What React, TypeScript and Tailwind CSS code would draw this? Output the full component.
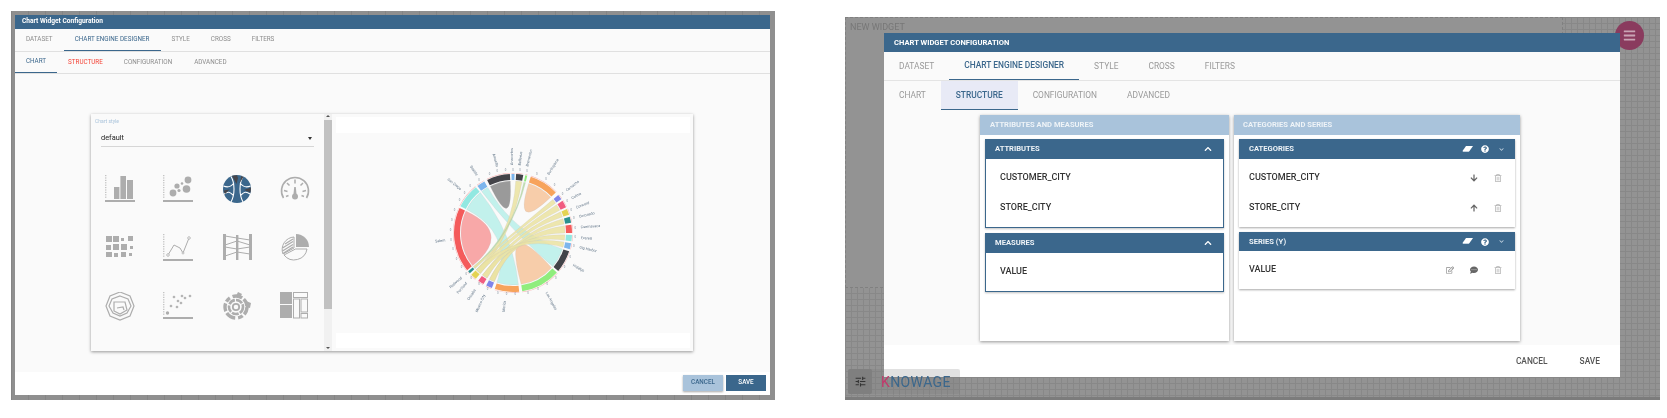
import { ReactNode } from 'react';
import {
  FaArrowDown,
  FaArrowUp,
  FaBars,
  FaChevronDown,
  FaChevronUp,
  FaCommentDots,
  FaQuestionCircle,
  FaRegEdit,
  FaRegTrashAlt,
} from 'react-icons/fa';
import { MdTune } from 'react-icons/md';

const GREY = '#adadad';

// chord chart data, angles in degrees clockwise from the top
const segments = [
  { a0: -26, a1: -3, color: '#434348', label: 'Amarillo' },
  { a0: -1.5, a1: 1.5, color: '#7cb5ec', label: 'Anacortes' },
  { a0: 3, a1: 10, color: '#434348', label: 'Bellevue' },
  { a0: 12, a1: 14, color: '#90ed7d', label: 'Bremerton' },
  { a0: 17.5, a1: 46.5, color: '#f7a35c', label: 'Burlingame' },
  { a0: 50, a1: 55, color: '#8085e9', label: 'Camacho' },
  { a0: 57, a1: 64, color: '#f15c80', label: 'Colma' },
  { a0: 66, a1: 72, color: '#e4d354', label: 'Concord' },
  { a0: 74, a1: 80, color: '#2b908f', label: 'Coronado' },
  { a0: 82, a1: 90, color: '#f45b5b', label: 'Cuernavaca' },
  { a0: 92, a1: 98, color: '#91e8e1', label: 'Everett' },
  { a0: 100, a1: 106, color: '#7cb5ec', label: 'Gig Harbor' },
  { a0: 108, a1: 130, color: '#434348', label: 'Hidalgo' },
  { a0: 132, a1: 171, color: '#90ed7d', label: 'Los Angeles' },
  { a0: 174, a1: 198, color: '#f7a35c', label: 'Merida' },
  { a0: 201, a1: 207, color: '#8085e9', label: 'Mexico City' },
  { a0: 210, a1: 216, color: '#f15c80', label: 'Orizaba' },
  { a0: 219, a1: 225, color: '#e4d354', label: 'Portland' },
  { a0: 227, a1: 229.5, color: '#2b908f', label: 'Redwood' },
  { a0: 231, a1: 295, color: '#f45b5b', label: 'Salem' },
  { a0: 297, a1: 321, color: '#91e8e1', label: 'San Diego' },
  { a0: 323, a1: 331, color: '#7cb5ec', label: 'Seattle' },
];

const ribbons = [
  { a: [-26, -3], b: [-26, -3], color: '#8c8c8c' },
  { a: [17.5, 46.5], b: [17.5, 46.5], color: '#f6c69e' },
  { a: [231, 295], b: [231, 295], color: '#f79c9c' },
  { a: [132, 171], b: [132, 171], color: '#f6c69e', pull: [24, 331] },
  { a: [297, 321], b: [174, 198], color: '#b9efe9' },
  { a: [323, 331], b: [108, 130], color: '#b9efe9' },
  { a: [3, 10], b: [219, 225], color: '#ebe3a3' },
  { a: [12, 14], b: [227, 229.5], color: '#b6dca4' },
  { a: [50, 55], b: [227, 229.5], color: '#ebe3a3' },
  { a: [57, 64], b: [219, 225], color: '#ebe3a3' },
  { a: [66, 72], b: [210, 216], color: '#ebe3a3' },
  { a: [74, 80], b: [201, 207], color: '#ebe3a3' },
  { a: [82, 90], b: [201, 207], color: '#ebe3a3' },
  { a: [92, 98], b: [210, 216], color: '#ebe3a3' },
  { a: [100, 106], b: [219, 225], color: '#ebe3a3' },
];

const pt = (r: number, deg: number) => {
  const rad = (deg * Math.PI) / 180;
  return `${(r * Math.sin(rad)).toFixed(2)} ${(-r * Math.cos(rad)).toFixed(2)}`;
};

const ringPath = (a0: number, a1: number, r0: number, r1: number) => {
  const large = a1 - a0 > 180 ? 1 : 0;
  return `M${pt(r1, a0)}A${r1} ${r1} 0 ${large} 1 ${pt(r1, a1)}L${pt(r0, a1)}A${r0} ${r0} 0 ${large} 0 ${pt(r0, a0)}Z`;
};

const ribbonPath = (a: number[], b: number[], r: number, pull?: number[]) => {
  const c = pull ? pt(pull[0], pull[1]) : '0 0';
  if (a[0] === b[0]) {
    return `M${pt(r, a[0])}A${r} ${r} 0 0 1 ${pt(r, a[1])}Q${c} ${pt(r, a[0])}Z`;
  }
  return `M${pt(r, a[0])}A${r} ${r} 0 0 1 ${pt(r, a[1])}Q${c} ${pt(r, b[0])}A${r} ${r} 0 0 1 ${pt(r, b[1])}Q${c} ${pt(r, a[0])}Z`;
};

function ChordChart() {
  return (
    <svg width="190" height="190" viewBox="-95 -95 190 190">
      {ribbons.map((r, i) => (
        <path key={i} d={ribbonPath(r.a, r.b, 52, r.pull)} fill={r.color} fillOpacity={0.88} stroke="#bdbdbd" strokeWidth={0.2} />
      ))}
      {segments.map((s) => {
        const mid = (s.a0 + s.a1) / 2;
        const flip = (mid + 360) % 360 > 180;
        const count = Math.max(1, Math.round((s.a1 - s.a0) / 9));
        const ticks = Array.from({ length: count }, (_, i) => s.a0 + ((i + 0.5) * (s.a1 - s.a0)) / count);
        return (
          <g key={s.label}>
            <path d={ringPath(s.a0, s.a1, 53, 59)} fill={s.color} />
            <path d={ringPath(s.a0, s.a1, 59.6, 60)} fill="#f7a8a8" />
            <text
              transform={`rotate(${mid}) translate(0 -68) rotate(${flip ? 90 : -90})`}
              textAnchor={flip ? 'end' : 'start'}
              fontSize="3.7"
              fill="#5f7386"
            >
              {s.label}
            </text>
            {ticks.map((t) => (
              <text key={t} transform={`rotate(${t}) translate(0 -62.5) rotate(${-t})`} textAnchor="middle" fontSize="2.8" fill="#7d8c9a">
                0
              </text>
            ))}
          </g>
        );
      })}
    </svg>
  );
}

function Axis() {
  return (
    <>
      <path d="M0.8 0V24" stroke={GREY} strokeWidth="1" strokeDasharray="1.2 1.2" />
      <rect x="0" y="25" width="30" height="2" fill={GREY} />
    </>
  );
}

const chartIcons: ReactNode[] = [
  // bar
  <>
    <Axis />
    <rect x="9" y="12" width="5.4" height="12" fill={GREY} />
    <rect x="15.4" y="1" width="5.6" height="23" fill={GREY} />
    <rect x="22" y="5" width="6" height="19" fill={GREY} />
  </>,
  // bubble
  <>
    <Axis />
    <circle cx="25" cy="5" r="3.4" fill={GREY} />
    <circle cx="23.5" cy="14" r="3.8" fill={GREY} />
    <circle cx="14" cy="11" r="2.6" fill={GREY} />
    <circle cx="10" cy="18" r="3.4" fill={GREY} />
    <circle cx="16" cy="15.5" r="1.6" fill={GREY} />
    <circle cx="19" cy="8.5" r="1.3" fill={GREY} />
  </>,
  // chord, selected
  <>
    <circle cx="15" cy="14" r="14" fill="#3b678c" />
    <path d="M9 1.5C13 8 13 20 9 27M21 1.5C17 8 17 20 21 27M1.5 11C6 13 9 12 12 8M28.5 11C24 13 21 12 18 8M2 19C6 16 8 17 11 20M28 19C24 16 22 17 19 20" fill="none" stroke="#fff" strokeWidth="1.1" />
    <path d="M10 0.8L14.5 9L16 3L15 0.3ZM19.5 1L17.5 8L21.5 2ZM22 15L28.5 17.5L29 12.5ZM1.5 15.5L7.5 14.5L3 19Z" fill="#46464b" />
  </>,
  // gauge
  <>
    <path d="M3.5 23A13.5 13.5 0 1 1 26.5 23" fill="none" stroke={GREY} strokeWidth="1.6" />
    <path d="M15 4.5V8.5M7 8L9.5 10.5M23 8L20.5 10.5M4 15.5L7.5 16.5M26 15.5L22.5 16.5M6 21.5L8.5 20.5M24 21.5L21.5 20.5" stroke={GREY} strokeWidth="1.5" />
    <path d="M14.2 12H15.8L16.6 20H13.4Z" fill={GREY} />
    <circle cx="15" cy="21.5" r="3" fill={GREY} />
  </>,
  // heatmap
  <>
    {[
      [1, 2, 6, 6], [8, 2, 6, 6], [16, 4, 3, 3], [23, 2, 5, 5],
      [1, 11, 5, 5], [8, 10, 6, 6], [16, 10, 6, 6], [25, 12, 3, 3],
      [1, 18, 6, 5], [9, 19, 4, 4], [16, 18, 5, 5], [24, 19, 3, 3],
    ].map(([x, y, w, h], i) => (
      <rect key={i} x={x} y={y} width={w} height={h} fill={GREY} />
    ))}
  </>,
  // line
  <>
    <Axis />
    <path d="M5 21L11 11L17 14L20 19L26 4" fill="none" stroke={GREY} strokeWidth="1" />
    <circle cx="5" cy="21" r="1.3" fill="#fafafa" stroke={GREY} strokeWidth="0.8" />
    <circle cx="26" cy="4" r="1.3" fill="#fafafa" stroke={GREY} strokeWidth="0.8" />
    <circle cx="20" cy="19" r="1" fill="#fafafa" stroke={GREY} strokeWidth="0.8" />
  </>,
  // parallel
  <>
    <rect x="1" y="0" width="3" height="26" fill={GREY} />
    <rect x="27" y="0" width="3" height="26" fill={GREY} />
    <rect x="14" y="1" width="2.4" height="25" fill={GREY} />
    <path d="M3 2L15 4L28 6M3 11L15 7L28 11M3 13L15 15L28 13M3 22L15 18L28 20" fill="none" stroke={GREY} strokeWidth="1" />
  </>,
  // pie
  <>
    <path d="M16 0A13 13 0 0 1 29 13H16Z" fill={GREY} />
    <path d="M14 3A12.5 12.5 0 0 0 3 20L14 14Z" fill="none" stroke={GREY} strokeWidth="1" />
    <path d="M5 10L13 5M2.5 14L13 7.5M2.5 17L13 10.5M3 19.5L13 13" stroke={GREY} strokeWidth="1.3" />
    <path d="M4 21A13 13 0 0 0 27 15H15.5Z" fill="none" stroke={GREY} strokeWidth="1" />
  </>,
  // radar
  <>
    <path d="M15 0L25 4L29 14L25 24L15 28L5 24L1 14L5 4Z" fill="none" stroke={GREY} strokeWidth="1.2" />
    <path d="M15 4L23 7L26 14L22 21L15 24L8 21L4 14L7 7Z" fill="none" stroke={GREY} strokeWidth="1.2" />
    <path d="M9 10H20L22 18L15 22L9 19Z" fill="none" stroke={GREY} strokeWidth="1.2" />
    <path d="M12 16L18 15L19 18" fill="none" stroke={GREY} strokeWidth="1.2" />
  </>,
  // scatter
  <>
    <Axis />
    <circle cx="4.5" cy="21" r="1.7" fill={GREY} />
    {[[11, 5], [15, 9], [19, 4], [27, 4], [8, 14], [14, 15], [18, 11], [22, 6]].map(([x, y], i) => (
      <path key={i} d={`M${x} ${y - 1.6}L${x + 1.6} ${y}L${x} ${y + 1.6}L${x - 1.6} ${y}Z`} fill={GREY} />
    ))}
  </>,
  // sunburst
  <>
    <circle cx="14" cy="15" r="3.2" fill="none" stroke={GREY} strokeWidth="1.8" />
    <circle cx="14" cy="15" r="7" fill="none" stroke={GREY} strokeWidth="2.6" strokeDasharray="7 1.2" />
    <circle cx="14" cy="15" r="11" fill="none" stroke={GREY} strokeWidth="3.4" strokeDasharray="8 2 5 3 10 2" />
    <path d="M16 0L20 2L18 5.5L14 4Z" fill={GREY} />
    <path d="M24 9L29 11L28 16L24 15Z" fill={GREY} />
  </>,
  // treemap
  <>
    <rect x="0" y="0" width="12" height="12" fill={GREY} />
    <rect x="0" y="13" width="12" height="13" fill={GREY} />
    <rect x="13.5" y="0.5" width="14" height="5" fill="none" stroke={GREY} strokeWidth="1" />
    <rect x="13.5" y="7" width="6" height="19" fill="none" stroke={GREY} strokeWidth="1" />
    <rect x="21" y="7" width="6.5" height="13" fill="none" stroke={GREY} strokeWidth="1" />
    <rect x="21" y="21.5" width="6.5" height="4.5" fill="none" stroke={GREY} strokeWidth="1" />
  </>,
];

function LeftDialog() {
  return (
    <div className="flex h-full flex-col bg-white">
      <div className="flex h-[14px] items-center bg-[#3b678c] pl-[7px] text-[6.6px] font-bold text-white">Chart Widget Configuration</div>
      <div className="flex h-[23px] items-stretch border-b border-[#e0e0e0] bg-[#fafafa] text-[6.3px] text-[#8c8c8c] uppercase">
        <div className="flex items-center px-[11px]">Dataset</div>
        <div className="flex w-[97px] items-center justify-center border-b border-[#3b678c] text-[#3b678c]">Chart Engine Designer</div>
        <div className="flex items-center px-[11px]">Style</div>
        <div className="flex items-center px-[10px]">Cross</div>
        <div className="flex items-center px-[11px]">Filters</div>
      </div>
      <div className="flex h-[22px] items-stretch border-b border-[#e0e0e0] bg-[#fafafa] text-[6.3px] text-[#8c8c8c] uppercase">
        <div className="flex w-[42px] items-center justify-center border-b border-[#3b678c] text-[#3b678c]">Chart</div>
        <div className="ml-[11px] flex items-center text-[#f44336]">Structure</div>
        <div className="ml-[21px] flex items-center">Configuration</div>
        <div className="ml-[22px] flex items-center">Advanced</div>
      </div>
      <div className="flex-1 bg-[#fafafa] pt-[40px] pl-[76px]">
        <div className="flex h-[237px] w-[602px] bg-[#fafafa] shadow-[0_1px_3px_rgba(0,0,0,0.4)]">
          <div className="w-[233px]">
            <div className="pt-[4px] pl-[4px] text-[5px] leading-[7px] text-[#a9c3db]">Chart style</div>
            <div className="mx-[10px] mt-[8px] flex h-[14px] items-center justify-between border-b border-[#d6d6d6] pb-[3px] text-[7.4px] text-[#222]">
              default
              <span className="mr-[2px] h-0 w-0 border-x-[2.5px] border-t-[3px] border-x-transparent border-t-[#333]" />
            </div>
            <div className="mt-[14px] grid grid-cols-4 auto-rows-[58.5px]">
              {chartIcons.map((icon, i) => (
                <div key={i} className="flex items-center justify-center">
                  <svg width="30" height="30" viewBox="0 0 30 30">
                    {icon}
                  </svg>
                </div>
              ))}
            </div>
          </div>
          <div className="flex w-[8px] flex-col items-center justify-between bg-[#f1f1f1] pt-[1px] pb-[2px]">
            <span className="h-0 w-0 border-x-[2px] border-b-[2px] border-x-transparent border-b-[#555]" />
            <div className="mb-auto mt-[3px] h-[189px] w-full bg-[#c1c1c1]" />
            <span className="h-0 w-0 border-x-[2px] border-t-[2px] border-x-transparent border-t-[#555]" />
          </div>
          <div className="mt-[3px] ml-[4px] flex h-[231px] w-[354px] flex-col bg-white">
            <div className="h-[16px]" />
            <div className="flex h-[200px] items-center justify-center bg-[#fafafa]">
              <ChordChart />
            </div>
          </div>
        </div>
      </div>
      <div className="flex h-[23px] justify-end gap-[3px] bg-white pt-[3px] pr-[4px] text-[6.3px] font-medium uppercase">
        <div className="flex h-[16px] w-[40px] items-center justify-center bg-[#a9c3db] text-[#3b678c] shadow-[0_1px_2px_rgba(0,0,0,0.35)]">Cancel</div>
        <div className="flex h-[16px] w-[40px] items-center justify-center bg-[#3b678c] text-white">Save</div>
      </div>
    </div>
  );
}

function EraserMark() {
  return (
    <svg width="11" height="7" viewBox="0 0 11 7">
      <path d="M4 0H11L7.5 5H0.5Z" fill="#fff" />
      <path d="M0.5 5H7.5L6.8 6H1Z" fill="#c4d3e0" />
    </svg>
  );
}

function DropHeader({ title, open, tools, h = 'h-5' }: { title: string; open?: boolean; tools?: boolean; h?: string }) {
  return (
    <div className={`flex ${h} items-center justify-between bg-[#3b678c] text-[7.6px] font-bold text-[#eef3f7]`}>
      <span className={open ? 'pl-[9px]' : 'pl-[10px]'}>{title}</span>
      {open && <FaChevronUp className="mr-[11px] h-[8px] w-[8px] text-white" />}
      {tools && (
        <div className="flex items-center pr-[5px] text-white">
          <span className="flex w-[17px] justify-center">
            <EraserMark />
          </span>
          <span className="flex w-[17px] justify-center">
            <FaQuestionCircle className="h-[8px] w-[8px]" />
          </span>
          <span className="flex w-[17px] justify-center">
            <FaChevronDown className="h-[5px] w-[5px] text-[#c4d3e0]" />
          </span>
        </div>
      )}
    </div>
  );
}

function FieldRow({ name, left, children }: { name: string; left?: boolean; children?: ReactNode }) {
  return (
    <div className={`flex h-[30px] items-center justify-between text-[9px] font-medium text-[#333] ${left ? 'pl-[14px]' : 'pl-[10px]'}`}>
      {name}
      <div className="flex items-center pr-[5px] text-[#8a8a8a]">{children}</div>
    </div>
  );
}

function RowIcon({ children }: { children: ReactNode }) {
  return <span className="flex w-6 justify-center">{children}</span>;
}

const trash = (
  <RowIcon>
    <FaRegTrashAlt className="h-[8px] w-[8px] text-[#b5b5b5]" />
  </RowIcon>
);

function RightDialog() {
  return (
    <div className="relative z-10 ml-[39px] flex h-[344px] w-[736px] flex-col bg-white">
      <div className="flex h-[19px] items-center bg-[#3b678c] pl-[10px] text-[7.6px] font-bold text-white">CHART WIDGET CONFIGURATION</div>
      <div className="flex h-[29px] items-stretch border-b border-[#e4e4e4] bg-[#fafafa] text-[8.4px] text-[#9a9a9a]">
        <div className="flex items-center px-[15px]">DATASET</div>
        <div className="flex items-center border-b border-[#3b678c] px-[15px] font-medium text-[#3b678c]">CHART ENGINE DESIGNER</div>
        <div className="flex items-center px-[15px]">STYLE</div>
        <div className="flex items-center px-[15px]">CROSS</div>
        <div className="flex items-center px-[15px]">FILTERS</div>
      </div>
      <div className="flex h-[29px] items-stretch bg-[#fafafa] text-[8.4px] text-[#9a9a9a]">
        <div className="flex items-center px-[15px]">CHART</div>
        <div className="flex items-center border-b border-[#3b678c] bg-[#e8eaf6] px-[15px] font-medium text-[#3b678c]">STRUCTURE</div>
        <div className="flex items-center px-[15px]">CONFIGURATION</div>
        <div className="flex items-center px-[15px]">ADVANCED</div>
      </div>
      <div className="flex h-[235px] items-start gap-[5px] bg-[#fafafa] pt-[5px] pl-[96px]">
        <div className="h-[226px] w-[249px] bg-white shadow-[0_1px_3px_rgba(0,0,0,0.4)]">
          <div className="flex h-5 items-center bg-[#a9c3db] pl-[10px] text-[7.6px] font-bold text-[#eef3f7]">ATTRIBUTES AND MEASURES</div>
          <div className="flex flex-col gap-[5px] px-[5px] pt-[4px]">
            <div className="border-x border-b border-[#3b678c] shadow-[0_1px_2px_rgba(0,0,0,0.25)]">
              <DropHeader title="ATTRIBUTES" open />
              <div className="py-[4px]">
                <FieldRow name="CUSTOMER_CITY" left />
                <FieldRow name="STORE_CITY" left />
              </div>
            </div>
            <div className="border-x border-b border-[#3b678c] shadow-[0_1px_2px_rgba(0,0,0,0.25)]">
              <DropHeader title="MEASURES" open />
              <div className="py-[4px]">
                <FieldRow name="VALUE" left />
              </div>
            </div>
          </div>
        </div>
        <div className="h-[226px] w-[286px] bg-white shadow-[0_1px_3px_rgba(0,0,0,0.4)]">
          <div className="flex h-5 items-center bg-[#a9c3db] pl-[9px] text-[7.6px] font-bold text-[#eef3f7]">CATEGORIES AND SERIES</div>
          <div className="flex flex-col gap-[5px] px-[5px] pt-[4px]">
            <div className="shadow-[0_1px_2px_rgba(0,0,0,0.35)]">
              <DropHeader title="CATEGORIES" tools />
              <div className="py-[4px]">
                <FieldRow name="CUSTOMER_CITY">
                  <RowIcon>
                    <FaArrowDown className="h-[8px] w-[8px] text-[#666]" />
                  </RowIcon>
                  {trash}
                </FieldRow>
                <FieldRow name="STORE_CITY">
                  <RowIcon>
                    <FaArrowUp className="h-[8px] w-[8px] text-[#666]" />
                  </RowIcon>
                  {trash}
                </FieldRow>
              </div>
            </div>
            <div className="shadow-[0_1px_2px_rgba(0,0,0,0.35)]">
              <DropHeader title="SERIES (Y)" tools h="h-[19px]" />
              <div className="py-[4px]">
                <FieldRow name="VALUE">
                  <RowIcon>
                    <FaRegEdit className="h-[8px] w-[8px] text-[#8a8a8a]" />
                  </RowIcon>
                  <RowIcon>
                    <FaCommentDots className="h-[8px] w-[8px] text-[#666]" />
                  </RowIcon>
                  {trash}
                </FieldRow>
              </div>
            </div>
          </div>
        </div>
      </div>
      <div className="flex flex-1 items-center justify-end gap-[32px] bg-white pr-[20px] text-[8.4px] font-medium text-[#555]">
        <span>CANCEL</span>
        <span>SAVE</span>
      </div>
    </div>
  );
}

export default function App() {
  return (
    <div className="flex h-[418px] w-[1667px] bg-white [font-family:Roboto,sans-serif]">
      <div className="mt-[11px] ml-[11px] h-[389px] w-[764px] bg-[#8f8f8f] bg-[linear-gradient(90deg,#858585_1px,transparent_1px)] bg-[size:17px_17px] pt-[4px] pr-[5px] pb-[5px] pl-[4px] blur-[0.4px]">
        <LeftDialog />
      </div>
      <div className="relative mt-[17px] ml-[70px] h-[383px] w-[815px] border-b-[3px] border-[#7c7c7c] bg-[#939393] bg-[linear-gradient(#888888_1px,transparent_1px),linear-gradient(90deg,#888888_1px,transparent_1px)] bg-[size:6px_6px] pt-[16px] blur-[0.25px]">
        {/* widget behind the dialog */}
        <div className="absolute top-0 left-0 h-[271px] w-[718px] border border-dashed border-[#808080] bg-[#939393] pt-[3px] pl-[4px] text-[9px] text-[#777]">NEW WIDGET</div>
        <div className="absolute top-[4px] left-[770px] flex h-[29px] w-[29px] items-center justify-center rounded-full bg-[#8a3b5e] text-[#c9a5b5]">
          <FaBars className="h-[13px] w-[13px]" />
        </div>
        <RightDialog />
        {/* knowage bar over the page */}
        <div className="absolute top-[352px] left-[3px] z-20 flex h-[25px] w-[112px] items-center rounded-[2px] bg-[rgba(120,120,120,0.22)]">
          <div className="flex h-full w-[24px] items-center justify-center rounded-[2px] bg-[#7f7f7f] text-[#333]">
            <MdTune className="h-[13px] w-[13px]" />
          </div>
          <div className="ml-[9px] text-[14px] leading-none font-normal tracking-[0.4px] text-[#3b678c]">
            <span className="text-[#c2386b]">K</span>NOWAGE
          </div>
        </div>
      </div>
    </div>
  );
}
